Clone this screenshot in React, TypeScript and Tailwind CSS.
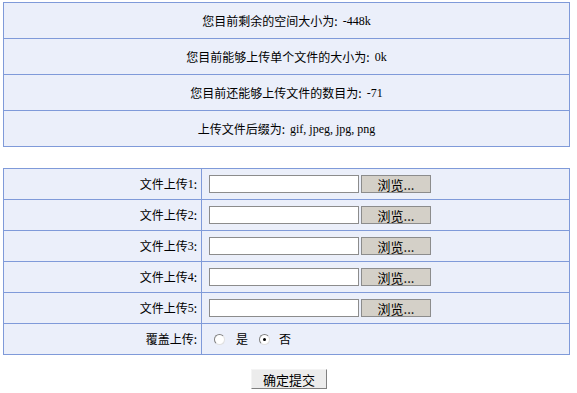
import React from 'react';

const font = { fontFamily: '"Noto Sans CJK SC", "Liberation Sans", sans-serif' };
const latin = { fontFamily: '"Liberation Serif", serif' };

const infoRows = [
  { label: '您目前剩余的空间大小为:', value: '-448k' },
  { label: '您目前能够上传单个文件的大小为:', value: '0k' },
  { label: '您目前还能够上传文件的数目为:', value: '-71' },
  { label: '上传文件后缀为:', value: 'gif, jpeg, jpg, png' },
];

function Radio({ checked }: { checked?: boolean }) {
  return (
    <span className="relative inline-block w-[11px] h-[11px] rounded-full bg-white border border-t-[#808080] border-l-[#808080] border-b-[#e0e0e0] border-r-[#e0e0e0]">
      {checked && (
        <span className="absolute left-[3px] top-[3px] w-[3px] h-[3px] rounded-full bg-black" />
      )}
    </span>
  );
}

function FileRow({ n }: { n: number }) {
  return (
    <div className="flex h-[31px] border-b border-[#7f9ad9]">
      <div className="w-[198px] flex items-center justify-end pr-[4px] border-r border-[#7f9ad9]">
        文件上传<span style={latin} className="text-[12px]">{n}</span>:
      </div>
      <div className="flex items-center pl-[7px] gap-[2px]">
        <div className="w-[150px] h-[18px] bg-white border border-[#8c8c8c]" />
        <div className="w-[70px] h-[18px] bg-[#d4d0c8] border border-[#8c8c8c] flex items-center justify-center text-[13px] leading-none">
          浏览...
        </div>
      </div>
    </div>
  );
}

export default function App() {
  return (
    <div className="w-[577px] h-[393px] bg-white text-black text-[12px] pt-[2px]" style={font}>
      {/* Info table */}
      <div className="ml-[3px] w-[567px] border border-b-0 border-[#7f9ad9] bg-[#ebeffa]">
        {infoRows.map((r) => (
          <div key={r.label} className="h-[36px] border-b border-[#7f9ad9] flex items-center justify-center">
            <span>{r.label}</span>
            <span className="ml-[5px] text-[12px]" style={latin}>{r.value}</span>
          </div>
        ))}
      </div>

      {/* Upload form */}
      <div className="mt-[21px] ml-[3px] w-[567px] border border-b-0 border-[#7f9ad9] bg-[#ebeffa]">
        {[1, 2, 3, 4, 5].map((n) => (
          <FileRow key={n} n={n} />
        ))}
        <div className="flex h-[31px] border-b border-[#7f9ad9]">
          <div className="w-[198px] flex items-center justify-end pr-[4px] border-r border-[#7f9ad9]">
            覆盖上传:
          </div>
          <div className="flex items-center pl-[12px]">
            <Radio />
            <span className="ml-[11px]">是</span>
            <span className="ml-[11px] flex"><Radio checked /></span>
            <span className="ml-[9px]">否</span>
          </div>
        </div>
      </div>

      <div className="flex justify-center mt-[14px]">
        <div className="ml-[1px] w-[76px] h-[20px] bg-[#ececec] border border-t-[#f4f4f4] border-l-[#f4f4f4] border-b-[#808080] border-r-[#808080] flex items-center justify-center text-[13px] leading-none">
          确定提交
        </div>
      </div>
    </div>
  );
}
